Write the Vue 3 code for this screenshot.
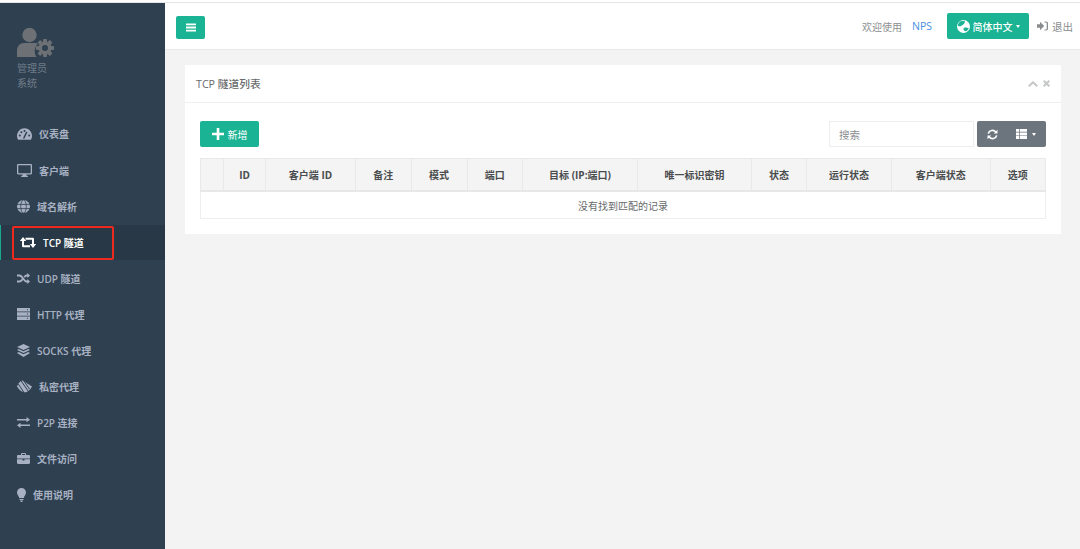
<script setup>
const items = [
  { label: '仪表盘', w: 15, h: 12, vb: '0 0 15 12', icon: '<path fill="currentColor" d="M7.500 .3C3.400 .3 0 3.700 0 8c0 1.500.4 2.800 1.100 3.800h12.800C14.600 10.800 15 9.500 15 8 15 3.700 11.600.3 7.500.3z"/><g fill="#2f4050"><circle cx="2.800" cy="7.600" r="1"/><circle cx="4.400" cy="4.300" r="1"/><circle cx="7.500" cy="3" r="1"/><circle cx="12.200" cy="7.600" r="1"/></g><path stroke="#2f4050" stroke-width="1.500" d="M6.600 10.500 9.800 4"/>' },
  { label: '客户端', w: 15, h: 13, vb: '0 0 15 13', icon: '<path fill="currentColor" fill-rule="evenodd" d="M1.200 0h12.600C14.500 0 15 .5 15 1.200v8.100c0 .7-.5 1.200-1.200 1.200H1.200C.5 10.500 0 10 0 9.300V1.200C0 .5.5 0 1.200 0zM1.300 1.300v7.900h12.400V1.300zM5.800 10.500h3.400l.4 1.300h1.200V13H4.200v-1.200h1.200z"/>' },
  { label: '域名解析', w: 13, h: 13, vb: '0 0 13 13', icon: '<circle cx="6.500" cy="6.500" r="6.500" fill="currentColor"/><g fill="none" stroke="#2f4050" stroke-width=".8"><ellipse cx="6.500" cy="6.500" rx="2.800" ry="6.500"/><path d="M0 4.400h13M0 8.600h13"/></g>' },
  { label: 'TCP 隧道', w: 16, h: 11, vb: '0 0 16 11', active: true, icon: '<path fill="currentColor" d="M3 .1 6.200 4H-.2zM13 10.900 9.800 7h6.400z"/><path fill="none" stroke="currentColor" stroke-width="2" d="M3 3.500v5.400c0 .2.100.3.300.3H10M13 7.500V2.100c0-.2-.1-.3-.3-.3H5.500"/>' },
  { label: 'UDP 隧道', w: 13, h: 11, vb: '0 0 13 11', icon: '<path fill="none" stroke="currentColor" stroke-width="1.900" d="M0 2.500h2.600c3 0 4 6 7 6h1.600M0 8.500h2.600c1.300 0 2.200-1 3-2.200M7.300 4.200C8 3.200 8.600 2.500 9.600 2.500h1.600"/><path fill="currentColor" d="M10.300 0 13 2.500 10.300 5zM10.300 6 13 8.500 10.300 11z"/>' },
  { label: 'HTTP 代理', w: 13, h: 12, vb: '0 0 13 12', icon: '<path fill="currentColor" d="M0 0h13v3.400H0zM0 4.300h13v3.400H0zM0 8.600h13V12H0z"/><path fill="#2f4050" d="M10 1.200h1v1h-1zM10 5.500h1v1h-1zM10 9.800h1v1h-1z"/>' },
  { label: 'SOCKS 代理', w: 13, h: 13, vb: '0 0 13 13', icon: '<path fill="currentColor" d="M6.500 0 13 3 6.500 6 0 3zM1.700 5 6.500 7.200 11.300 5 13 5.900 6.500 9 0 5.900zM1.700 8 6.500 10.200 11.300 8 13 8.900 6.500 13 0 8.900z"/>' },
  { label: '私密代理', w: 15, h: 13, vb: '0 0 15 13', icon: '<path fill="currentColor" d="M0 6.300C1.500 3.200 3.500 1 5.500.6l9.500 6C13.400 9.800 11 12.400 8 12.400 4.600 12.400 1.800 9.600 0 6.300z"/><g stroke="#2f4050" stroke-width="1"><path d="M3.500 0 12.500 13"/><path d="M1.200 3.900 7.300 13"/><path d="M6.300 .2 12.600 9.200"/></g>' },
  { label: 'P2P 连接', w: 13, h: 11, vb: '0 0 13 11', icon: '<path fill="currentColor" d="M0 1.900h9.500V0L13 2.700 9.500 5.300V3.500H0zM13 7.500H3.500V5.700L0 8.300 3.500 11V9.100H13z"/>' },
  { label: '文件访问', w: 13, h: 11, vb: '0 0 13 11', icon: '<path fill="currentColor" fill-rule="evenodd" d="M4 2V.9C4 .4 4.400 0 4.900 0h3.200C8.600 0 9 .4 9 .9V2h2.800c.7 0 1.200.5 1.200 1.200v2.300H0V3.200C0 2.500.5 2 1.200 2zM5 1v1h3V1z"/><path fill="currentColor" d="M0 6.200h5.500v1.200h2V6.200H13v3.600c0 .7-.5 1.200-1.200 1.200H1.200C.5 11 0 10.500 0 9.800z"/>' },
  { label: '使用说明', w: 9, h: 14, vb: '0 0 9 14', icon: '<path fill="currentColor" d="M4.500 0C2 0 0 1.900 0 4.400c0 2.200 1.800 3.300 2.200 5.600h4.600C7.200 7.700 9 6.600 9 4.400 9 1.900 7 0 4.500 0zM2.500 11h4v1h-4zM3 12.500h3L5.200 14H3.800z"/>' },
]
const columns = ['', 'ID', '客户端 ID', '备注', '模式', '端口', '目标 (IP:端口)', '唯一标识密钥', '状态', '运行状态', '客户端状态', '选项']
const widths = [23, 42, 90, 55.5, 56, 55.5, 115, 114, 55, 85, 98.500, 55.500]
</script>

<template>
  <div class="page">
    <div class="strip"></div>
    <div class="shell">
      <aside class="sidebar">
        <div class="profile">
          <svg class="avatar" width="37" height="29" viewBox="0 0 37 29">
            <circle cx="12.500" cy="7" r="7.200" fill="#6d7175" />
            <path d="M0 29v-6c0-5 3-8 7-8h11c1.500 0 2.500.3 3 .7-3.500 3-4.500 9-1.500 13.300z" fill="#6d7175" />
            <g fill="#6d7175">
              <circle cx="28" cy="20" r="6.500" />
              <path d="M26.300 11h3.400l.4 3h-4.200zM26.300 29h3.400l.4-3h-4.200zM19 18.300v3.400l3 .4v-4.200zM37 18.300v3.400l-3 .4v-4.200zM20.700 14.500l2.400-2.400 2.400 1.800-3 3zM35.300 25.500l-2.400 2.400-2.400-1.800 3-3zM35.300 14.500l-2.400-2.400-2.400 1.800 3 3zM20.700 25.500l2.400 2.400 2.400-1.800-3-3z" />
            </g>
            <circle cx="28" cy="20" r="3" fill="#2f4050" />
          </svg>
          <div class="role">管理员</div>
          <div class="role">系统</div>
        </div>
        <nav class="menu">
          <a v-for="item in items" :key="item.label" class="menu-item" :class="{ active: item.active }">
            <svg class="menu-icon" :width="item.w" :height="item.h" :viewBox="item.vb" v-html="item.icon"></svg>
            <span>{{ item.label }}</span>
            <i v-if="item.active" class="marker"></i>
          </a>
        </nav>
      </aside>

      <main class="main">
        <header class="navbar">
          <button class="btn-green burger" aria-label="menu">
            <svg width="10" height="9" viewBox="0 0 10 9"><path fill="#fff" d="M0 .5h10v1.800H0zM0 3.600h10v1.800H0zM0 6.700h10v1.800H0z" /></svg>
          </button>
          <div class="nav-right">
            <span class="welcome">欢迎使用</span>
            <span class="nps">NPS</span>
            <button class="btn-green lang">
              <svg width="13" height="13" viewBox="0 0 13 13">
                <circle cx="6.500" cy="6.500" r="6.500" fill="#fff" />
                <path fill="#1ab394" d="M3.500 1.200 7.500.8c1 1.700-.3 3-1.500 3.900S3.500 6.800 1.800 6.200 1.500 2.500 3.500 1.200zM6.800 8c1.500-.7 3.500-.5 5 .4-1 1.700-2.300 3-3.500 2.800S5.800 9 6.800 8z" />
              </svg>
              <span>简体中文</span>
              <i class="caret"></i>
            </button>
            <span class="logout">
              <svg width="11" height="10" viewBox="0 0 11 10"><path fill="#8a8d90" d="M0 3.200h3V.8L7.200 5 3 9.200V6.800H0zM7.500 .5h1.800c1 0 1.700.8 1.700 1.700v5.600c0 .9-.7 1.700-1.700 1.700H7.500V8.400h1.600c.4 0 .6-.3.600-.6V2.200c0-.3-.2-.6-.6-.6H7.500z" /></svg>
              <span>退出</span>
            </span>
          </div>
        </header>

        <section class="content">
          <div class="card">
            <div class="card-head">
              <h5>TCP 隧道列表</h5>
              <div class="tools">
                <svg width="10" height="6" viewBox="0 0 10 6"><path fill="none" stroke="#c4c6c8" stroke-width="1.900" d="M.8 5.300 5 1.300l4.200 4" /></svg>
                <svg width="7" height="7" viewBox="0 0 7 7"><path stroke="#c4c6c8" stroke-width="2" d="M.7.700l5.600 5.600M6.300.700.7 6.300" /></svg>
              </div>
            </div>
            <div class="card-body">
              <div class="toolbar">
                <button class="btn-green add">
                  <svg width="12" height="12" viewBox="0 0 12 12"><path fill="#fff" d="M4.700 0h2.600v4.700H12v2.600H7.300V12H4.700V7.300H0V4.700h4.700z" /></svg>
                  <span>新增</span>
                </button>
                <div class="toolbar-right">
                  <div class="search">搜索</div>
                  <div class="gray-group">
                    <svg width="11" height="11" viewBox="0 0 11 11"><path fill="none" stroke="#fff" stroke-width="1.700" d="M1.300 4.600A4.200 4.200 0 0 1 8.700 3M9.700 6.400A4.200 4.200 0 0 1 2.300 8" /><path fill="#fff" d="M10.500.8v3.700H6.800zM.5 10.200V6.500h3.700z" /></svg>
                    <span class="grid-btn">
                      <svg width="11" height="10" viewBox="0 0 11 10"><path fill="#fff" d="M0 0h3.300v2.800H0zM4 0h7v2.800H4zM0 3.500h3.300v2.900H0zM4 3.500h7v2.900H4zM0 7.100h3.300V10H0zM4 7.100h7V10H4z" /></svg>
                      <i class="caret"></i>
                    </span>
                  </div>
                </div>
              </div>
              <table class="grid">
                <colgroup>
                  <col v-for="(w, i) in widths" :key="i" :style="{ width: w + 'px' }" />
                </colgroup>
                <thead>
                  <tr><th v-for="(c, i) in columns" :key="i">{{ c }}</th></tr>
                </thead>
                <tbody>
                  <tr><td :colspan="columns.length">没有找到匹配的记录</td></tr>
                </tbody>
              </table>
            </div>
          </div>
        </section>
      </main>
    </div>
  </div>
</template>

<style>
html, body { margin: 0; background: #fff; }
</style>

<style scoped>
.page {
  width: 1080px;
  height: 549px;
  overflow: hidden;
  display: flex;
  flex-direction: column;
  font-family: "Open Sans", "Noto Sans CJK SC", sans-serif;
  color: #676a6c;
  font-size: 10px;
}
.strip { height: 3px; box-sizing: border-box; background: #fff; border-bottom: 1px solid #e6e6e6; flex: none; }
.shell { flex: 1; display: flex; min-height: 0; }
.sidebar { width: 165px; flex: none; background: #2f4050; color: #a7b1c2; }
.profile { height: 112.900px; box-sizing: border-box; padding: 25px 0 0 17px; }
.avatar { display: block; margin-bottom: 4px; }
.role { font-size: 10px; line-height: 15px; color: #6f7c89; }
.menu { display: flex; flex-direction: column; }
.menu-item {
  position: relative;
  height: 36.100px;
  display: flex;
  align-items: center;
  padding-left: 17px;
  font-size: 10px;
  font-weight: 600;
}
.menu-icon { flex: none; margin-right: 7px; }
.menu-item.active { background: #293846; box-shadow: inset 0 1px 0 #2f4050; color: #fff; padding-left: 20px; }
.marker {
  position: absolute;
  left: 12px;
  top: 2px;
  width: 102px;
  height: 34px;
  box-sizing: border-box;
  border: 2px solid #ee2a1e;
  border-radius: 2px;
}
.menu-item.active::before {
  content: "";
  position: absolute;
  left: 0;
  top: 1px;
  bottom: 0;
  width: 1px;
  background: #19aa8d;
}
.main { flex: 1; min-width: 0; background: #f3f3f3; display: flex; flex-direction: column; }
.navbar {
  height: 46px;
  flex: none;
  background: #fff;
  border-bottom: 1px solid #e7eaec;
  display: flex;
  align-items: center;
  justify-content: space-between;
  padding: 0 7px 0 11px;
}
button { font-family: inherit; border: 0; padding: 0; margin: 0; }
.btn-green {
  background: #1ab394;
  color: #fff;
  border-radius: 2px;
  display: inline-flex;
  align-items: center;
  justify-content: center;
  font-size: 10px;
}
.burger { width: 29px; height: 23px; margin-top: 2px; }
.nav-right { display: flex; align-items: center; }
.welcome { color: #8d8f91; width: 50px; }
.nps { color: #4a90e2; width: 35px; font-size: 10.500px; }
.lang { width: 82px; height: 26px; gap: 3px; font-weight: 500; }
.caret {
  display: inline-block;
  width: 0;
  height: 0;
  border-left: 2.500px solid transparent;
  border-right: 2.500px solid transparent;
  border-top: 3px solid #fff;
}
.logout { display: flex; align-items: center; gap: 4px; margin-left: 8px; color: #8a8d90; font-size: 10.500px; }
.content { padding: 15px 19px 0 20px; }
.card { background: #fff; height: 169px; box-sizing: border-box; }
.card-head {
  height: 38px;
  box-sizing: border-box;
  border-bottom: 1px solid #eeeff0;
  display: flex;
  align-items: center;
  justify-content: space-between;
  padding: 0 11px;
}
h5 { margin: 0; font-size: 10.700px; font-weight: 500; color: #676a6c; }
.tools { display: flex; align-items: center; gap: 5px; }
.card-body { padding: 18px 15px 0; }
.toolbar { display: flex; justify-content: space-between; height: 26px; margin-bottom: 11px; }
.add { width: 59px; height: 26px; gap: 4px; font-size: 10px; }
.toolbar-right { display: flex; gap: 3px; }
.search {
  width: 145px;
  height: 26px;
  box-sizing: border-box;
  border: 1px solid #eceded;
  padding-left: 9px;
  line-height: 26px;
  font-size: 10.500px;
  color: #8b8d8f;
}
.gray-group {
  width: 69px;
  height: 26px;
  box-sizing: border-box;
  padding: 0 10px;
  background: #6c757d;
  border-radius: 2px;
  display: flex;
  align-items: center;
  justify-content: space-between;
}
.grid-btn { display: inline-flex; align-items: center; gap: 5px; }
.grid {
  width: 845px;
  table-layout: fixed;
  border-collapse: collapse;
  font-size: 10px;
}
th {
  height: 31px;
  padding: 0;
  background: #f4f4f4;
  border: 1px solid #e9e9e9;
  border-bottom: 2px solid #e7e7e7;
  color: #4a4c4e;
  font-weight: 700;
  text-align: center;
}
td {
  height: 26px;
  padding: 0;
  border: 1px solid #eeeeee;
  text-align: center;
  color: #676a6c;
}
</style>
